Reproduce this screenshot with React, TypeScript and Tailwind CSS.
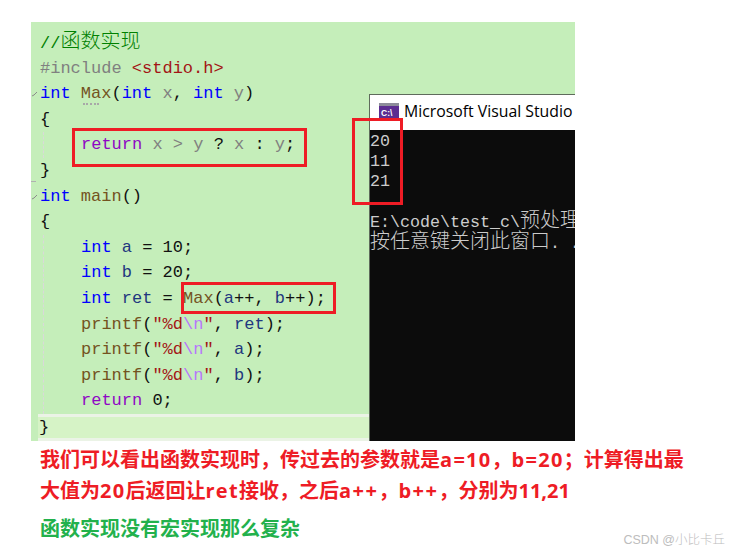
import type { ReactNode } from 'react';

const kw = 'text-[#0000ff]';
const fn = 'text-[#74531f]';
const pur = 'text-[#8f08c4]';
const prm = 'text-[#808080]';
const loc = 'text-[#1f377f]';
const str = 'text-[#a31515]';
const esc = 'text-[#b776fb]';
const blk = 'text-[#111111]';

function T({ c, children }: { c: string; children: ReactNode }) {
  return <span className={c}>{children}</span>;
}

function Line({ children, indent, box }: { children: ReactNode; indent?: boolean; box?: ReactNode }) {
  return (
    <div className={`relative h-[25.6px] whitespace-pre leading-[25.6px] ${indent ? 'pl-[50px]' : 'pl-[9px]'}`}>
      {indent && <div className="absolute left-[12px] top-0 h-full border-l border-dashed border-[#d9d9d9]" />}
      {children}
      {box}
    </div>
  );
}

function Fold() {
  return (
    <svg className="absolute left-0 top-[9px] h-2 w-2" viewBox="0 0 8 8" fill="none" stroke="#8a8a8a" strokeWidth="1">
      <path d="M1 6 L3 5 M3 5 L6 2" />
    </svg>
  );
}

function Printf({ arg }: { arg: string }) {
  return (
    <Line indent>
      <T c={fn}>printf</T>
      <T c={blk}>(</T>
      <T c={str}>"%d</T>
      <T c={esc}>\n</T>
      <T c={str}>"</T>
      <T c={blk}>, </T>
      <T c={loc}>{arg}</T>
      <T c={blk}>);</T>
    </Line>
  );
}

function CodePane() {
  return (
    <div className="w-[338px] shrink-0 pt-[8px] font-['Liberation_Mono','Noto_Sans_CJK_SC',monospace] text-[17px]">
      <Line>
        <T c="text-[#008000]">
          //<span className="text-[20px] font-light">函数实现</span>
        </T>
      </Line>
      <Line>
        <T c="text-[#808080]">#include </T>
        <T c={str}>&lt;stdio.h&gt;</T>
      </Line>
      <Line box={<div className="absolute left-[52px] top-[22px] w-[16px] border-t-2 border-dotted border-[#a8a8a8]" />}>
        <Fold />
        <T c={kw}>int</T>
        <T c={blk}> </T>
        <T c={fn}>Max</T>
        <T c={blk}>(</T>
        <T c={kw}>int</T>
        <T c={prm}> x</T>
        <T c={blk}>, </T>
        <T c={kw}>int</T>
        <T c={prm}> y</T>
        <T c={blk}>)</T>
      </Line>
      <Line>
        <T c={blk}>{'{'}</T>
      </Line>
      <Line
        indent
        box={<div className="absolute left-[41px] top-[-4px] h-[39px] w-[235px] border-[3px] border-[#ee1c25]" />}
      >
        <T c={pur}>return</T>
        <T c={prm}> x &gt; y </T>
        <T c={blk}>?</T>
        <T c={prm}> x </T>
        <T c={blk}>:</T>
        <T c={prm}> y</T>
        <T c={blk}>;</T>
      </Line>
      <Line box={<div className="absolute left-0 top-[23px] w-[5px] border-t border-[#b0b0b0]" />}>
        <T c={blk}>{'}'}</T>
      </Line>
      <Line>
        <Fold />
        <T c={kw}>int</T>
        <T c={blk}> </T>
        <T c={fn}>main</T>
        <T c={blk}>()</T>
      </Line>
      <Line>
        <T c={blk}>{'{'}</T>
      </Line>
      <Line indent>
        <T c={kw}>int</T>
        <T c={loc}> a</T>
        <T c={blk}> = 10;</T>
      </Line>
      <Line indent>
        <T c={kw}>int</T>
        <T c={loc}> b</T>
        <T c={blk}> = 20;</T>
      </Line>
      <Line
        indent
        box={<div className="absolute left-[150px] top-[-4px] h-[32px] w-[155px] border-[3px] border-[#ee1c25]" />}
      >
        <T c={kw}>int</T>
        <T c={loc}> ret</T>
        <T c={blk}> = </T>
        <T c={fn}>Max</T>
        <T c={blk}>(</T>
        <T c={loc}>a</T>
        <T c={blk}>++, </T>
        <T c={loc}>b</T>
        <T c={blk}>++);</T>
      </Line>
      <Printf arg="ret" />
      <Printf arg="a" />
      <Printf arg="b" />
      <Line indent>
        <T c={pur}>return</T>
        <T c={blk}> 0;</T>
      </Line>
      <div className="ml-[7px] h-[27px] w-[331px] border-y-[3px] border-[#ebf3e6] bg-[#d6f3c6] pl-[1px] leading-[21px] whitespace-pre">
        <T c={blk}>{'}'}</T>
      </div>
    </div>
  );
}

function ConsoleIcon() {
  return (
    <svg className="h-[17px] w-[20px] shrink-0" viewBox="0 0 20 17">
      <rect x="0" y="0" width="20" height="17" fill="#5c2d91" />
      <rect x="0" y="0" width="20" height="3" fill="#8d8d9a" />
      <text x="2" y="13" fontSize="8.5" fontWeight="700" fill="#ffffff" fontFamily="Liberation Sans, sans-serif">
        C:\
      </text>
    </svg>
  );
}

function ConsolePane() {
  return (
    <div className="mt-[72px] flex w-[206px] flex-col overflow-hidden border-l border-t border-[#5f6b5c]">
      <div className="flex h-[35px] shrink-0 items-center gap-[5px] bg-white pb-[2px] pl-[9px] font-['Open_Sans',sans-serif] text-[15.8px] whitespace-nowrap text-black">
        <ConsoleIcon />
        <span>Microsoft Visual Studio</span>
      </div>
      <div className="flex-1 bg-[#0c0c0c] pt-[2px] font-['Liberation_Mono','Noto_Sans_CJK_SC',monospace] text-[16.67px] leading-[20px] whitespace-pre text-[#cccccc]">
        <div>20</div>
        <div>11</div>
        <div>21</div>
        <div>&nbsp;</div>
        <div>
          E:\code\test_c\<span className="text-[20px] font-light">预处理</span>
        </div>
        <div>
          <span className="text-[20px] font-light">按任意键关闭此窗口</span>. . .
        </div>
      </div>
    </div>
  );
}

export default function App() {
  return (
    <div className="relative h-[554px] w-[735px] overflow-hidden bg-white">
      <div className="pl-[31px] pt-[22px]">
        <div className="relative flex h-[419px] w-[544px] bg-[#c5eeba]">
          <CodePane />
          <ConsolePane />
          {/* box around the console output */}
          <div className="absolute left-[321px] top-[96px] h-[87px] w-[51px] border-[3px] border-[#ee1c25]" />
        </div>
      </div>
      <div className="pl-[40px] font-['Open_Sans','Noto_Sans_CJK_SC',sans-serif] text-[20px] font-bold">
        <div className="h-[38px] leading-[38px] text-[#ee1c25]">
          我们可以看出函数实现时，传过去的参数就是<span className="tracking-[1.3px]">a=10</span>，
          <span className="tracking-[1.3px]">b=20</span>；计算得出最
        </div>
        <div className="h-[36px] leading-[24px] text-[#ee1c25]">
          大值为<span className="tracking-[1.3px]">20</span>后返回让<span className="tracking-[1.3px]">ret</span>
          接收，之后<span className="tracking-[1.5px]">a++</span>，<span className="tracking-[1.5px]">b++</span>，分别为11,21
        </div>
        <div className="leading-[27px] text-[#22b14c]">函数实现没有宏实现那么复杂</div>
      </div>
      <div className="absolute bottom-[4px] right-[10px] font-['Liberation_Sans','Noto_Sans_CJK_SC',sans-serif] text-[12.5px] font-light text-[#bdbdbd]">
        CSDN @小比卡丘
      </div>
    </div>
  );
}
